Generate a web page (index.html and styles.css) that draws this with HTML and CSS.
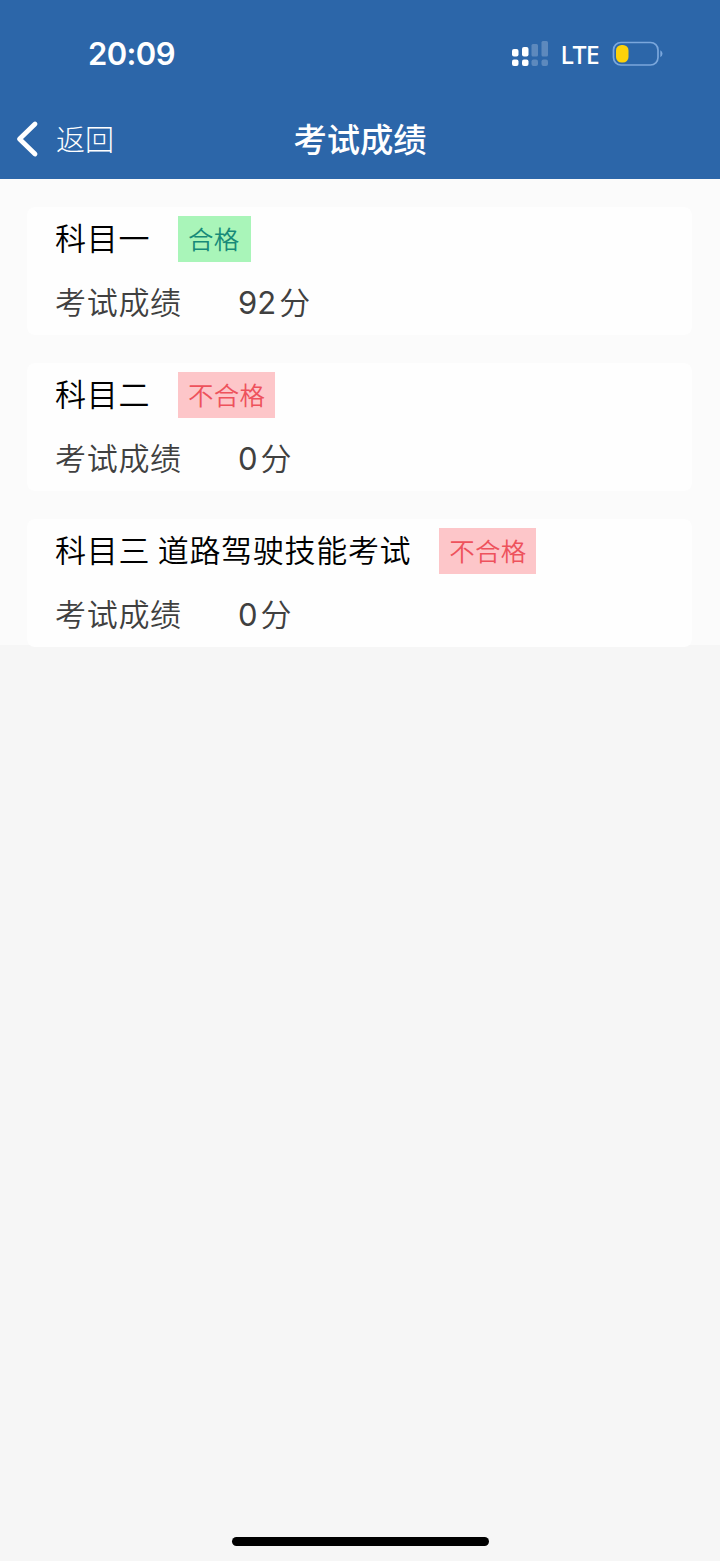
FILE: index.html
```html
<!DOCTYPE html>
<html lang="zh-CN">
<head>
  <meta charset="UTF-8">
  <meta name="viewport" content="width=device-width, initial-scale=1.0">
  <title>考试成绩</title>
  <link rel="stylesheet" href="styles.css">
</head>
<body>

<div id="app">
  <header class="header">
    <div class="status-bar">
      <span class="time">20:09</span>
      <div class="status-icons">
        <svg class="signal" width="36" height="26" viewBox="0 0 36 26" fill="#fff">
          <rect x="0" y="8" width="6.5" height="7.5" rx="2"/>
          <rect x="0" y="18.5" width="6.5" height="6.5" rx="2"/>
          <rect x="10" y="6" width="6.5" height="9.5" rx="2"/>
          <rect x="10" y="18.5" width="6.5" height="6.5" rx="2"/>
          <g opacity="0.23">
            <rect x="19.5" y="3" width="6.5" height="12.5" rx="1.5"/>
            <rect x="19.5" y="18.5" width="6.5" height="6.5" rx="2"/>
            <rect x="29.5" y="0" width="6.5" height="15.5" rx="1.5"/>
            <rect x="29.5" y="18.5" width="6.5" height="6.5" rx="2"/>
          </g>
        </svg>
        <span class="network">LTE</span>
        <svg class="battery" width="51" height="26" viewBox="0 0 51 26">
          <rect x="1.5" y="1.5" width="44.5" height="22.5" rx="7.5" fill="none" stroke="#7ba7dc" stroke-width="1.7"/>
          <rect x="4" y="4" width="12.5" height="17.5" rx="5.5" fill="#fdd20a"/>
          <path d="M48.3 9.3 Q50.5 10.5 50.5 12.8 Q50.5 15 48.3 16.3 Z" fill="#7ba7dc"/>
        </svg>
      </div>
    </div>
    <nav class="nav-bar">
      <a class="back">
        <svg width="24" height="38" viewBox="0 0 24 38" fill="none" stroke="#fff" stroke-width="4.8" stroke-linecap="round" stroke-linejoin="round">
          <path d="M20 4 L4.5 19 L20 34"/>
        </svg>
        <span>返回</span>
      </a>
      <h1 class="title">考试成绩</h1>
    </nav>
  </header>

  <main class="score-list">
    <section class="card">
      <div class="subject">
        <span>科目一</span>
        <span class="tag pass">合格</span>
      </div>
      <div class="score">
        <span class="label">考试成绩</span>
        <span class="num">92</span><span>分</span>
      </div>
    </section>

    <section class="card">
      <div class="subject">
        <span>科目二</span>
        <span class="tag fail">不合格</span>
      </div>
      <div class="score">
        <span class="label">考试成绩</span>
        <span class="num">0</span><span>分</span>
      </div>
    </section>

    <section class="card">
      <div class="subject">
        <span>科目三 道路驾驶技能考试</span>
        <span class="tag fail">不合格</span>
      </div>
      <div class="score">
        <span class="label">考试成绩</span>
        <span class="num">0</span><span>分</span>
      </div>
    </section>
  </main>

  <div class="home-indicator"></div>
</div>

</body>
</html>
```
FILE: styles.css
```css
* {
  box-sizing: border-box;
}

body {
  margin: 0;
  font-family: "Noto Sans CJK SC", sans-serif;
  background-color: #f6f6f6;
}

#app {
  display: flex;
  flex-direction: column;
  height: 1561px;
}

.header {
  height: 179px;
  background-color: #2c66a9;
  color: #fff;
}

.status-bar {
  display: flex;
  align-items: center;
  justify-content: space-between;
  height: 98px;
  padding: 10px 57px 0 88px;
}

.time {
  padding-bottom: 1px;
  font-family: Inter, sans-serif;
  font-size: 31px;
  font-weight: 600;
  letter-spacing: -0.6px;
}

.status-icons {
  display: flex;
  align-items: center;
}

.network {
  margin: 0 13px 0 13px;
  padding-bottom: 1px;
  font-family: "Noto Sans", sans-serif;
  font-size: 25px;
  font-weight: 500;
  letter-spacing: -0.8px;
}

.nav-bar {
  display: grid;
  grid-template-columns: 1fr auto 1fr;
  align-items: center;
  height: 81px;
  padding: 0 15px;
}

.back {
  display: flex;
  align-items: center;
  gap: 17px;
  font-size: 29px;
  font-weight: 300;
}

.back span {
  padding-bottom: 1px;
}

.title {
  margin: 0;
  padding-bottom: 3px;
  font-size: 33.3px;
  font-weight: 500;
}

.score-list {
  display: flex;
  flex-direction: column;
  gap: 28px;
  height: 466px;
  padding: 28px 28px 0 27px;
  background-color: #fbfbfb;
}

.card {
  flex: none;
  height: 128px;
  padding: 9px 28px;
  border-radius: 8px;
  background-color: #fefefe;
}

.subject,
.score {
  display: flex;
  align-items: center;
  height: 46px;
  font-size: 31px;
  font-weight: 350;
  line-height: 42px;
  letter-spacing: 0.7px;
}

.subject {
  gap: 28px;
  color: #000;
}

.subject span:first-child,
.score span {
  padding-bottom: 4px;
}

.score {
  margin-top: 18px;
  color: #404040;
}

.label {
  width: 183px;
}

.score .num {
  margin-right: 3px;
  padding-bottom: 0;
  font-family: Inter, sans-serif;
  font-weight: 400;
  letter-spacing: 0;
}

.tag {
  height: 46px;
  padding: 0 10px;
  font-size: 25.5px;
  line-height: 43px;
  letter-spacing: 0.2px;
}

.pass {
  padding-right: 11px;
  background-color: #a9f5b9;
  color: #178a78;
}

.fail {
  background-color: #fdc6c9;
  color: #ee525c;
}

.home-indicator {
  width: 257px;
  height: 9px;
  margin: auto auto 15px 232px;
  border-radius: 5px;
  background-color: #000;
}
```
